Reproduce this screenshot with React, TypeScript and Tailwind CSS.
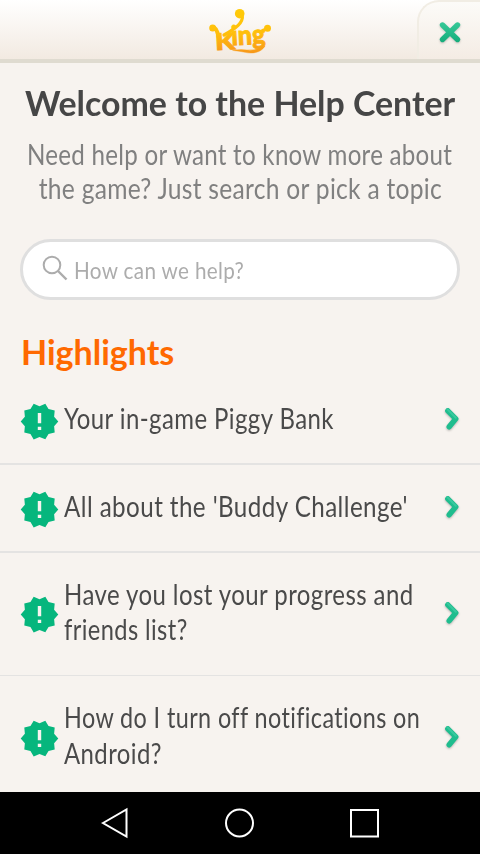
import { MdNewReleases } from "react-icons/md";

type Line = { text: string; className: string };
type Topic = { lines: Line[]; className: string };

const topics: Topic[] = [
  {
    className: "h-[77px] border-b-2 pb-[13px]",
    lines: [{ text: "Your in-game Piggy Bank", className: "mt-[2px] scale-x-[0.841]" }],
  },
  {
    className: "h-[88px] border-b-2 pb-[2px]",
    lines: [{ text: "All about the 'Buddy Challenge'", className: "mt-[2px] scale-x-[0.849]" }],
  },
  {
    className: "h-[123px] border-b pb-[3px]",
    lines: [
      { text: "Have you lost your progress and", className: "mt-px scale-x-[0.842]" },
      { text: "friends list?", className: "scale-x-[0.829]" },
    ],
  },
  {
    className: "h-[125px] border-b-0 pb-[4px]",
    lines: [
      { text: "How do I turn off notifications on", className: "scale-x-[0.82]" },
      { text: "Android?", className: "scale-x-[0.84]" },
    ],
  },
];

function Logo() {
  return (
    <svg width="66" height="50" viewBox="207 6 66 50" fill="none">
      <defs>
        <linearGradient id="gold" gradientUnits="userSpaceOnUse" x1="0" y1="8" x2="0" y2="55">
          <stop offset="0" stopColor="#ffcc08" />
          <stop offset="0.55" stopColor="#ffbe0c" />
          <stop offset="1" stopColor="#f7931a" />
        </linearGradient>
      </defs>
      <g fill="url(#gold)" stroke="url(#gold)" strokeLinecap="round">
        <circle cx="239.7" cy="13.700" r="4.800" stroke="none" />
        <path d="M242.300 15C243.500 23 236 28 224 35" strokeWidth="3.200" fill="none" />
        <circle cx="212.700" cy="28" r="3.500" stroke="none" />
        <path d="M212 27C216 27 217.500 31 218.500 37" strokeWidth="4" fill="none" />
        <circle cx="267.500" cy="28.300" r="3.500" stroke="none" />
        <path d="M260 32Q264 29 268 29.300" strokeWidth="3" fill="none" />
        <path d="M233 50.500Q240 49 247 50Q256 51 265 46C261 53 252 54 245 52.300Q239 51 233 50.500Z" strokeWidth="0.4" />
      </g>
      <g fill="url(#gold)" stroke="url(#gold)" strokeWidth="0.9" fontFamily="Lato, sans-serif" fontWeight="900">
        <text x="215" y="50" fontSize="23" textLength="20" lengthAdjust="spacingAndGlyphs" transform="rotate(-3 222 42)">K</text>
        <text x="231.500" y="44.500" fontSize="27" textLength="34" lengthAdjust="spacingAndGlyphs" transform="rotate(-3 248 40)">ing</text>
      </g>
    </svg>
  );
}

function CloseIcon() {
  return (
    <svg width="26" height="26" viewBox="0 0 26 26" fill="none" className="drop-shadow-[0_1px_1px_#0003]">
      <defs>
        <linearGradient id="mint" x1="0" y1="4" x2="0" y2="22" gradientUnits="userSpaceOnUse">
          <stop stopColor="#34c796" />
          <stop offset="1" stopColor="#16ad7b" />
        </linearGradient>
      </defs>
      <path d="M5.5 5L20.5 19.500M20.5 5L5.5 19.500" stroke="url(#mint)" strokeWidth="5.4" strokeLinecap="round" />
    </svg>
  );
}

function Chevron() {
  return (
    <svg width="16" height="26" viewBox="0 0 16 26" fill="none" className="shrink-0 drop-shadow-[0_1px_1px_#0004]">
      <path d="M3.8 4.8L11.8 12.8L5.2 20.8" stroke="#1fbd8e" strokeWidth="5.4" strokeLinecap="round" strokeLinejoin="round" />
      <path d="M3.5 3.4L11.8 11.8" stroke="#38c99e" strokeWidth="2" strokeLinecap="round" />
    </svg>
  );
}

function TopicRow({ lines, className }: Topic) {
  return (
    <li className={`flex items-center border-[#e4e3e2] pr-[20px] pl-[19px] ${className}`}>
      <MdNewReleases className="mt-1 size-[41px] shrink-0 text-[#06b67d]" />
      <p className="-mt-[2px] ml-1 w-0 flex-1 text-[28.5px] leading-[35.5px] tracking-[0.5px] whitespace-nowrap text-[#4a4a4a]">
        {lines.map((line) => (
          <span key={line.text} className={`block w-max origin-left ${line.className}`}>{line.text}</span>
        ))}
      </p>
      <Chevron />
    </li>
  );
}

export default function App() {
  return (
    <div className="flex h-[854px] w-[480px] flex-col overflow-hidden bg-[#f7f3ef] font-[Lato,sans-serif]">
      <header className="flex h-[63px] shrink-0 justify-end border-b-4 border-[#dfdbd0] bg-linear-to-b from-white to-[#f2eae1]">
        <div className="flex flex-1 justify-center pt-[6px] pl-[63px]"><Logo /></div>
        <button className="flex w-[63px] items-center justify-center rounded-tl-[22px] border-t-2 border-l-2 border-[#f1ede4] bg-linear-to-b from-[#fcfbf8] to-[#f4ece4] pt-1" aria-label="Close">
          <CloseIcon />
        </button>
      </header>
      <main className="flex flex-1 flex-col overflow-hidden">
        <h1 className="mt-[18px] flex h-[44px] justify-center text-[34.5px] leading-[44px] font-bold whitespace-nowrap text-[#464646]">
          <span className="scale-x-[0.982]">Welcome to the Help Center</span>
        </h1>
        <p className="mt-[12px] flex flex-col items-center text-[28px] leading-[34px] tracking-[0.3px] whitespace-nowrap text-[#808080]">
          <span className="scale-x-[0.862]">Need help or want to know more about</span>
          <span className="scale-x-[0.879]">the game? Just search or pick a topic</span>
        </p>
        <div className="mx-[20px] mt-[34px] flex h-[61px] shrink-0 items-center rounded-full border-[3px] border-[#dfdfdf] bg-white pl-[19px] text-[#acacac]">
          <svg width="26" height="26" viewBox="0 0 26 26" fill="none" stroke="currentColor" strokeWidth="2" className="-mt-1">
            <circle cx="10" cy="10" r="8.3" />
            <path d="M16 16L24.5 24.5" strokeWidth="2.4" />
          </svg>
          <span className="mt-[2px] ml-[6px] origin-left scale-x-[0.88] text-[23.5px] tracking-[0.4px] whitespace-nowrap">How can we help?</span>
        </div>
        <h2 className="mt-[30px] ml-[21px] h-[44px] w-max origin-left text-[34px] leading-[44px] font-bold text-[#ff6900]">Highlights</h2>
        <ul className="mt-[14px]">
          {topics.map((topic) => <TopicRow key={topic.lines[0].text} {...topic} />)}
        </ul>
      </main>
      <nav className="flex h-[62px] shrink-0 justify-center bg-black">
        <svg width="280" height="62" viewBox="100 792 280 62" fill="none" stroke="#fff" strokeWidth="2">
          <path d="M103 823L126.5 809.5V836.5Z" />
          <circle cx="239.5" cy="823" r="13.5" />
          <path d="M351 810H378V836.500H351Z" />
        </svg>
      </nav>
    </div>
  );
}
